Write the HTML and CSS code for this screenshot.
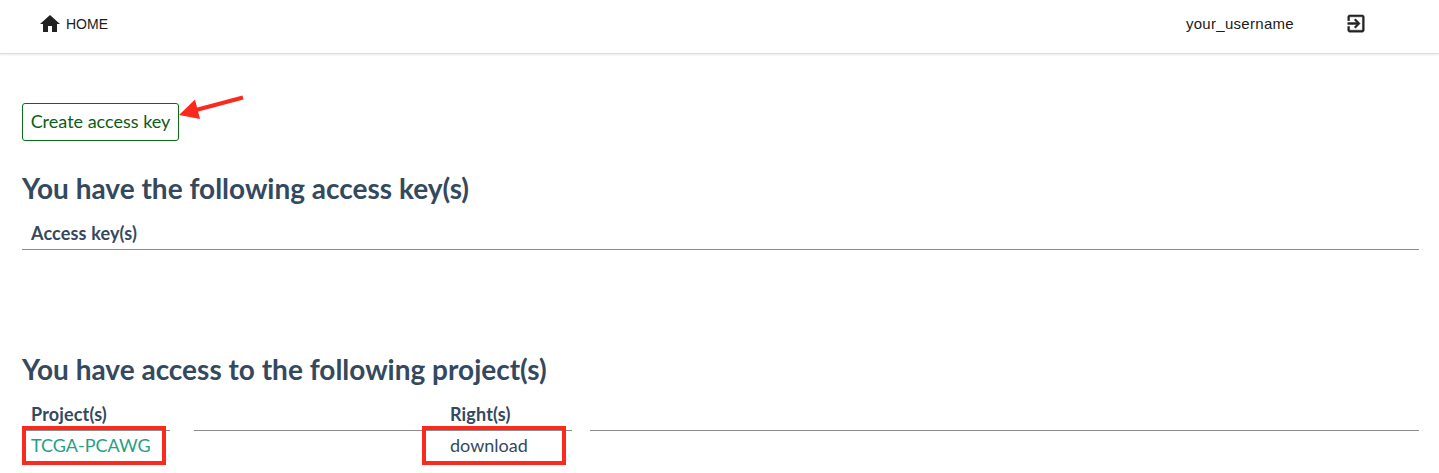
FILE: index.html
```
<!DOCTYPE html>
<html lang="en">
<head>
<meta charset="utf-8">
<title>Access keys</title>
<link rel="stylesheet" href="styles.css">
</head>
<body>
<header class="topbar">
  <a class="home">
    <svg class="home-icon" viewBox="0 0 24 24"><path d="M10 20v-6h4v6h5v-8h3L12 3 2 12h3v8z"/></svg>
    <span class="home-label">HOME</span>
  </a>
  <div class="account">
    <span class="username">your_username</span>
    <svg class="exit-icon" viewBox="0 0 24 24" preserveAspectRatio="none"><path d="M10.09 15.59L11.5 17l5-5-5-5-1.41 1.41L12.67 11H3v2h9.67l-2.58 2.59zM19 3H5c-1.11 0-2 .9-2 2v4h2V5h14v14H5v-4H3v4c0 1.1.89 2 2 2h14c1.1 0 2-.9 2-2V5c0-1.1-.9-2-2-2z"/></svg>
  </div>
</header>
<main class="page">
  <div class="actions">
    <button class="create">Create access key</button>
    <svg class="arrow" viewBox="0 0 66 28"><path d="M64 3.500L17 16" stroke="#fc2a1c" stroke-width="4" fill="none"/><path d="M0 21L16 5.500L21 25Z" fill="#fc2a1c"/></svg>
  </div>
  <section class="keys">
    <h2 class="title">You have the following access key(s)</h2>
    <div class="key-head">Access key(s)</div>
  </section>
  <section class="projects">
    <h2 class="title">You have access to the following project(s)</h2>
    <div class="grid">
      <div class="cell">Project(s)</div>
      <div class="cell cell-right">Right(s)</div>
      <div class="cell"></div>
    </div>
    <div class="values">
      <a class="mark project">TCGA-PCAWG</a>
      <span class="mark right">download</span>
    </div>
  </section>
</main>
</body>
</html>
```
FILE: styles.css
```
* { box-sizing: border-box; }
body {
  margin: 0;
  height: 473px;
  overflow: hidden;
  background: #fff;
  color: #34495e;
  font: 18px/24px Lato, sans-serif;
}
.topbar {
  display: flex;
  justify-content: space-between;
  align-items: center;
  height: 54px;
  padding: 0 72px 6px 38px;
  border-bottom: 1px solid #dcdcdc;
  box-shadow: 0 1px 2px rgba(0, 0, 0, 0.08);
  color: #1b1b1b;
  font-family: "Liberation Sans", Arial, sans-serif;
}
.home, .account { display: flex; align-items: center; }
.home { gap: 4px; font-size: 14px; }
.home-icon { width: 24px; height: 24px; fill: #222; }
.account { gap: 51px; font-size: 15px; }
.username { letter-spacing: 0.3px; }
.exit-icon {
  width: 22px;
  height: 23px;
  margin-top: -1px;
  fill: #222;
  stroke: #222;
  stroke-width: 0.5;
}
.page { padding: 49px 20px 0 22px; }
.actions { display: flex; align-items: flex-start; height: 38px; }
.create {
  width: 157px;
  height: 38px;
  padding: 0 0 2px;
  border: 1px solid #0b6b14;
  border-radius: 3px;
  background: #fff;
  color: #0d5c14;
  font: 18px/34px Lato, sans-serif;
}
.arrow { width: 66px; height: 28px; margin-top: -9px; }
.title { margin: 0; font-size: 28px; line-height: 34px; font-weight: 700; }
.keys { padding-top: 30px; height: 211px; }
.key-head,
.cell {
  height: 45px;
  padding: 16px 9px 0;
  border-bottom: 1px solid #8c8c8c;
  font-weight: 700;
  letter-spacing: 0.15px;
}
.grid { display: grid; grid-template-columns: 172px 396px 829px; }
.cell { margin-right: 24px; }
.cell-right { margin-right: 18px; padding-left: 256px; }
.cell:last-child { margin-right: 0; }
.values { display: flex; gap: 256px; margin-top: -5px; position: relative; }
.mark {
  width: 144px;
  height: 39px;
  border: 4px solid #fc2a1c;
  line-height: 31px;
}
.project { padding-left: 5px; color: #26a083; }
.right { padding-left: 24px; }
```
